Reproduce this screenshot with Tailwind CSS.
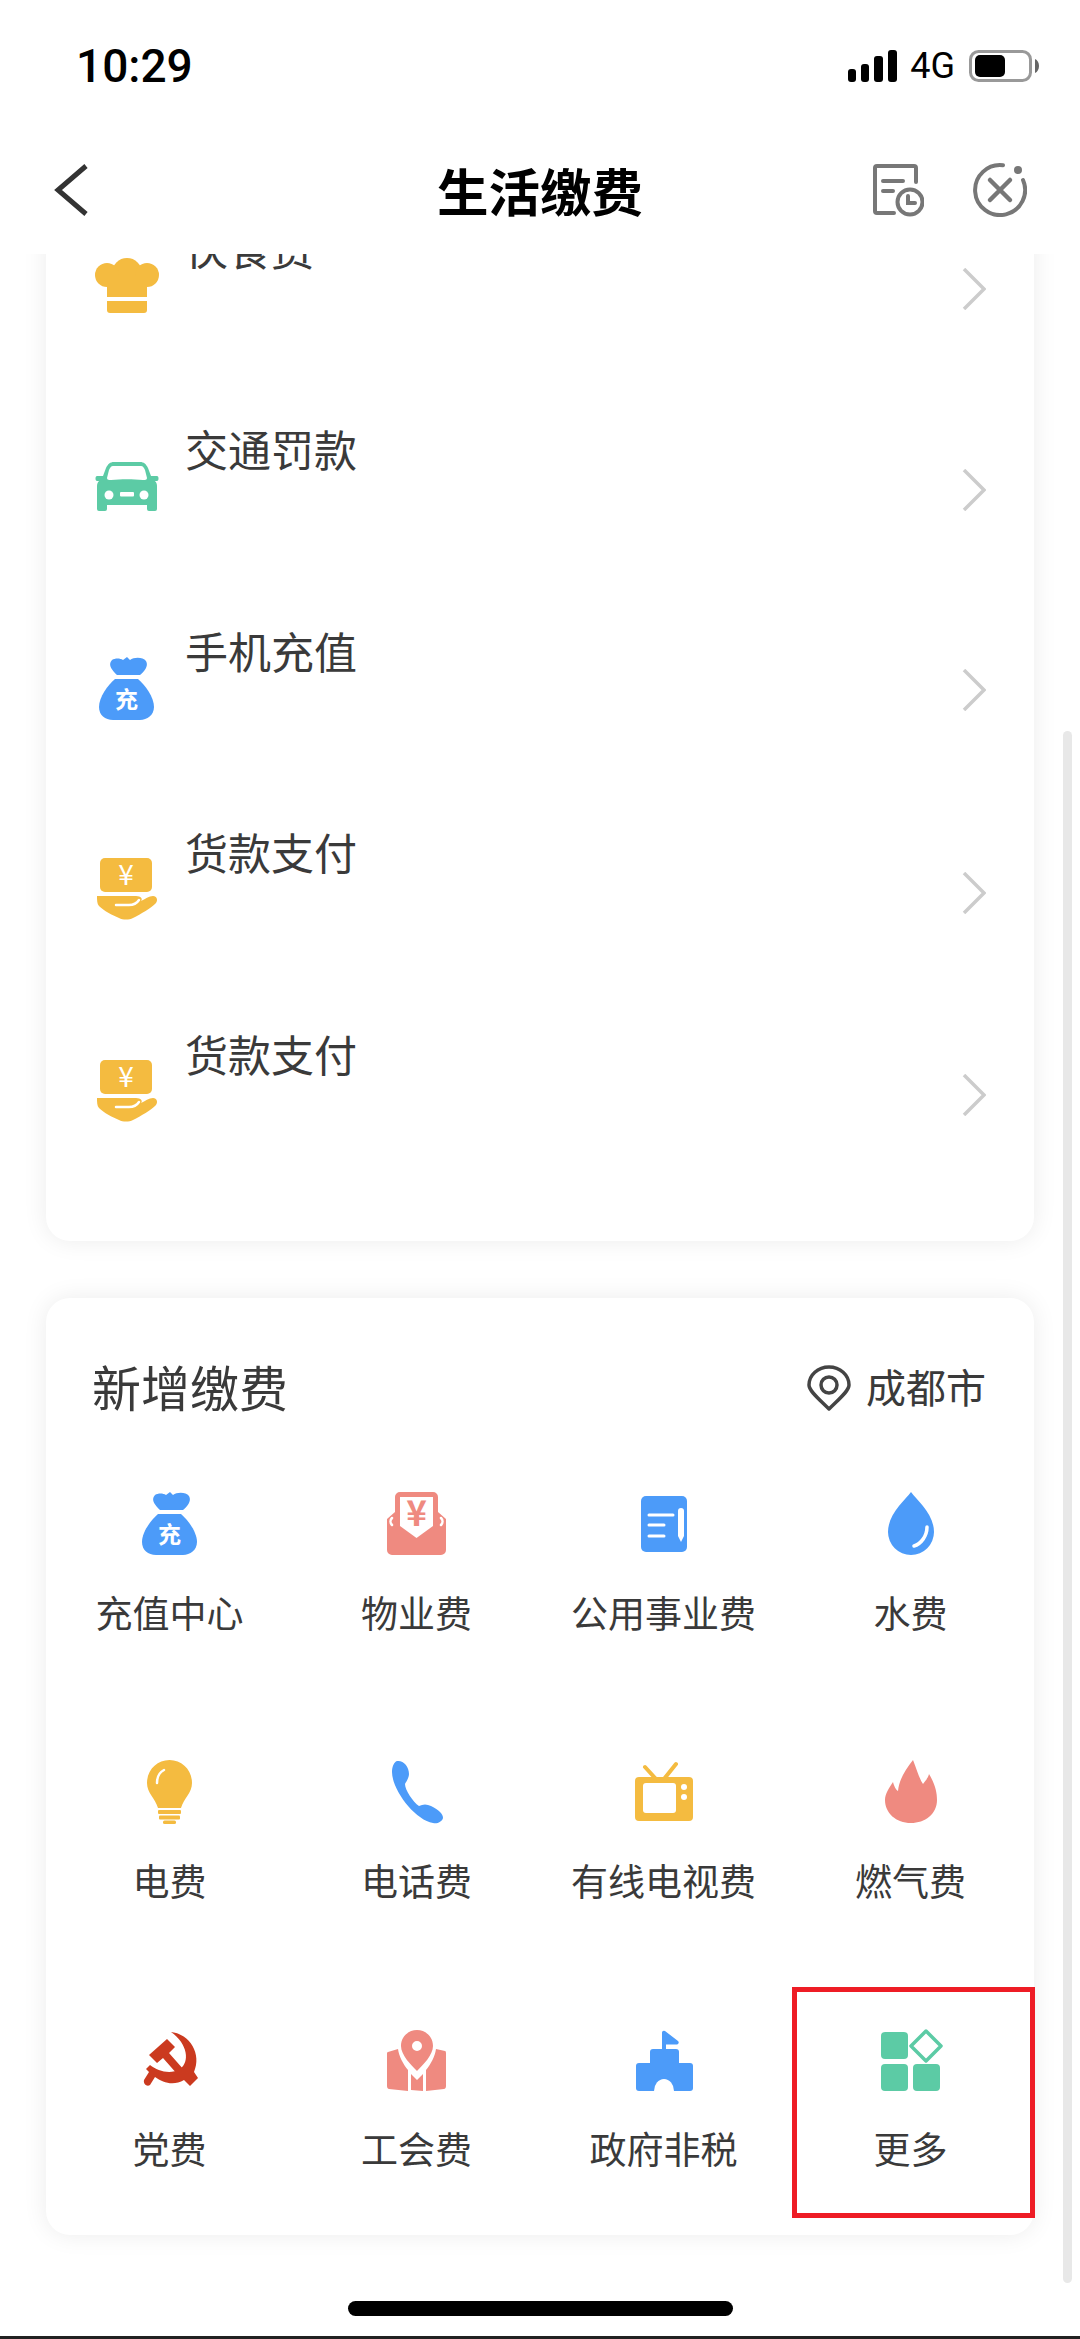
<!DOCTYPE html>
<html lang="zh-CN">
<head>
  <meta charset="UTF-8">
  <meta name="viewport" content="width=device-width, initial-scale=1.0">
  <title>生活缴费</title>
  <script src="https://cdn.jsdelivr.net/npm/@tailwindcss/browser@4"></script>
</head>
<body class="bg-white text-[#3a3a3a] font-['Noto_Sans_CJK_SC','Noto_Sans',sans-serif]">
  <div class="relative w-[1080px] h-[2339px] overflow-hidden flex flex-col">

    <!-- Status bar -->
    <div class="h-[132px] shrink-0 flex items-center pl-[76px] pr-[41px] font-['Roboto',sans-serif] text-black">
      <span class="text-[46px] font-medium leading-none">10:29</span>
      <svg class="ml-auto" width="49" height="32" viewBox="0 0 49 32" fill="#000">
        <rect x="0" y="19" width="8" height="13" rx="3"/>
        <rect x="13" y="14" width="8" height="18" rx="3"/>
        <rect x="26" y="6" width="9" height="26" rx="3"/>
        <rect x="40" y="0" width="9" height="32" rx="3"/>
      </svg>
      <span class="ml-[13px] text-[36px] leading-none">4G</span>
      <svg class="ml-[14px]" width="70" height="32" viewBox="0 0 70 32">
        <rect x="1.5" y="1.5" width="60" height="29" rx="8" fill="none" stroke="#999" stroke-width="3"/>
        <rect x="6" y="5" width="30" height="22" rx="5" fill="#000"/>
        <path d="M66 9c2.500 1 4 4 4 7s-1.500 6-4 7Z" fill="#666"/>
      </svg>
    </div>

    <!-- Nav bar -->
    <header class="h-[122px] shrink-0 pb-[6px] grid grid-cols-[1fr_auto_1fr] items-center">
      <svg class="ml-[53px]" width="36" height="52" viewBox="0 0 36 52" fill="none" stroke="#333" stroke-width="5">
        <path d="M33 2 5 26 33 50"/>
      </svg>
      <h1 class="text-[51.5px] font-bold text-black leading-none">生活缴费</h1>
      <div class="flex items-center justify-end gap-[49px] pr-[53px]">
        <svg width="52" height="54" viewBox="0 0 52 54" fill="none" stroke="#777" stroke-width="4" stroke-linecap="round">
          <path d="M22 50H5a2 2 0 0 1-2-2V5a2 2 0 0 1 2-2H42a2 2 0 0 1 2 2V19"/>
          <path d="M11 18H31M11 28H21"/>
          <circle cx="38" cy="39" r="12.500"/>
          <path d="M36 33V40H43"/>
        </svg>
        <svg width="54" height="54" viewBox="0 0 54 54" fill="none" stroke="#777" stroke-width="4" stroke-linecap="round">
          <path d="M30 2.200A25 25 0 1 0 50 17"/>
          <path d="M17 17 37 37M37 17 17 37" stroke-width="4.500"/>
          <circle cx="45" cy="7" r="4" fill="#777" stroke="none"/>
        </svg>
      </div>
    </header>

    <!-- Content -->
    <main class="flex-1 overflow-hidden px-[46px]">
      <!-- Scrolled list card -->
      <section class="-mt-[37.5px] bg-white rounded-[24px] shadow-[0_0_24px_rgba(0,0,0,0.08)] pb-[17px]">
        <div class="h-[201.5px] flex items-start pl-[49px] pr-[48px]">
          <svg class="mt-[37px] shrink-0" width="64" height="64" viewBox="0 0 64 64" fill="#f4bb40">
            <circle cx="32" cy="19" r="15"/>
            <circle cx="12" cy="21" r="12"/>
            <circle cx="52" cy="21" r="12"/>
            <path d="M12 22H52V43H12Z"/>
            <path d="M12 47H52V56a3 3 0 0 1-3 3H15a3 3 0 0 1-3-3Z"/>
          </svg>
          <span class="ml-[26px] mt-[9px] text-[43px] leading-[42px]">伙食费</span>
          <svg class="ml-auto mt-[51px]" width="24" height="42" viewBox="0 0 24 42" fill="none" stroke="#ccc" stroke-width="3.500"><path d="M2 1 22 21 2 41"/></svg>
        </div>
        <div class="h-[201.5px] flex items-start pl-[49px] pr-[48px]">
          <svg class="mt-[37px] shrink-0" width="64" height="64" viewBox="0 0 64 64">
            <path fill="#5ccba5" d="M19 7H45C49 7 51 9 53 13L56 21H62C64 21 64 26 62 26H60C62 28 62 30 62 32V54a2 2 0 0 1-2 2H54a2 2 0 0 1-2-2V50H12V54a2 2 0 0 1-2 2H4a2 2 0 0 1-2-2V32C2 30 2 28 4 26H2C0 26 0 21 2 21H8L11 13C13 9 15 7 19 7Z"/>
            <path fill="#fff" d="M18 11H46C48 11 49 13 50 15L52 23C52 25 50 25 48 25 38 24 26 24 16 25 14 25 12 25 12 23L14 15C15 13 16 11 18 11Z"/>
            <circle cx="14" cy="40" r="4.500" fill="#fff"/>
            <circle cx="49" cy="40" r="4.500" fill="#fff"/>
            <rect x="25" y="37" width="14" height="4.500" rx="1" fill="#fff"/>
          </svg>
          <span class="ml-[26px] mt-[9px] text-[43px] leading-[42px]">交通罚款</span>
          <svg class="ml-auto mt-[51px]" width="24" height="42" viewBox="0 0 24 42" fill="none" stroke="#ccc" stroke-width="3.500"><path d="M2 1 22 21 2 41"/></svg>
        </div>
        <div class="h-[201.5px] flex items-start pl-[49px] pr-[48px]">
          <svg class="mt-[37px] shrink-0" width="64" height="64" viewBox="0 0 64 64">
            <path fill="#4c9bf9" d="M17 3c3-2 8-2 11 0l4-3 3 3c4-3 13-3 16 1 3 5-2 11-6 14H22C18 14 12 8 17 3Z"/>
            <path fill="#4c9bf9" d="M20 22H43C50 28 59 40 59 50 59 58 52 63 45 63H18C10 63 4 58 4 50 4 40 13 28 20 22Z"/>
            <text x="31.5" y="51" text-anchor="middle" font-size="23" font-weight="700" fill="#fff" font-family="Noto Sans CJK SC">充</text>
          </svg>
          <span class="ml-[26px] mt-[9px] text-[43px] leading-[42px]">手机充值</span>
          <svg class="ml-auto mt-[49px]" width="24" height="42" viewBox="0 0 24 42" fill="none" stroke="#ccc" stroke-width="3.500"><path d="M2 1 22 21 2 41"/></svg>
        </div>
        <div class="h-[201.5px] flex items-start pl-[49px] pr-[48px]">
          <svg class="mt-[37px] shrink-0" width="64" height="64" viewBox="0 0 64 64">
            <rect x="5" y="0" width="52" height="34" rx="5" fill="#f4bb40"/>
            <text x="31" y="27" text-anchor="middle" font-size="28" fill="#fff" font-family="Noto Sans CJK SC">¥</text>
            <path fill="#f4bb40" d="M2 38H41C46 38 48 41 46 43 50 41 54 38 58 38 62 38 63 42 61 45 56 50 46 56 38 60 34 62 28 62 24 60 17 57 9 53 4 48 2 46 2 42 2 38Z"/>
            <path fill="none" stroke="#fff" stroke-width="2.500" stroke-linecap="round" d="M21 47H34C38 47 42 45 44 42"/>
          </svg>
          <span class="ml-[26px] mt-[9px] text-[43px] leading-[42px]">货款支付</span>
          <svg class="ml-auto mt-[51px]" width="24" height="42" viewBox="0 0 24 42" fill="none" stroke="#ccc" stroke-width="3.500"><path d="M2 1 22 21 2 41"/></svg>
        </div>
        <div class="h-[201.5px] flex items-start pl-[49px] pr-[48px]">
          <svg class="mt-[37px] shrink-0" width="64" height="64" viewBox="0 0 64 64">
            <rect x="5" y="0" width="52" height="34" rx="5" fill="#f4bb40"/>
            <text x="31" y="27" text-anchor="middle" font-size="28" fill="#fff" font-family="Noto Sans CJK SC">¥</text>
            <path fill="#f4bb40" d="M2 38H41C46 38 48 41 46 43 50 41 54 38 58 38 62 38 63 42 61 45 56 50 46 56 38 60 34 62 28 62 24 60 17 57 9 53 4 48 2 46 2 42 2 38Z"/>
            <path fill="none" stroke="#fff" stroke-width="2.500" stroke-linecap="round" d="M21 47H34C38 47 42 45 44 42"/>
          </svg>
          <span class="ml-[26px] mt-[9px] text-[43px] leading-[42px]">货款支付</span>
          <svg class="ml-auto mt-[51px]" width="24" height="42" viewBox="0 0 24 42" fill="none" stroke="#ccc" stroke-width="3.500"><path d="M2 1 22 21 2 41"/></svg>
        </div>
      </section>

      <!-- New payment card -->
      <section class="relative mt-[57px] bg-white rounded-[24px] shadow-[0_0_24px_rgba(0,0,0,0.08)] pt-[64px] pb-[69px]">
        <div class="flex items-center pl-[46px] pr-[48px] h-[48px]">
          <h2 class="text-[49px] leading-[48px]">新增缴费</h2>
          <svg class="ml-auto mt-[4px]" width="44" height="46" viewBox="0 0 44 46" fill="none" stroke="#444" stroke-width="3.500">
            <path d="M22 44C12 34 2 26 2 20a20 18 0 0 1 40 0C42 26 32 34 22 44Z" stroke-linejoin="round"/>
            <circle cx="22" cy="20" r="8"/>
          </svg>
          <span class="ml-[15px] text-[40px] leading-[48px]">成都市</span>
        </div>

        <div class="mt-[82px] grid grid-cols-4 gap-y-[130px] text-[37px] leading-[36px] text-center">
          <div class="flex flex-col items-center gap-[38px]">
            <svg width="64" height="64" viewBox="0 0 64 64">
              <path fill="#4c9bf9" d="M17 3c3-2 8-2 11 0l4-3 3 3c4-3 13-3 16 1 3 5-2 11-6 14H22C18 14 12 8 17 3Z"/>
              <path fill="#4c9bf9" d="M20 22H43C50 28 59 40 59 50 59 58 52 63 45 63H18C10 63 4 58 4 50 4 40 13 28 20 22Z"/>
              <text x="31.5" y="51" text-anchor="middle" font-size="23" font-weight="700" fill="#fff" font-family="Noto Sans CJK SC">充</text>
            </svg>
            <span>充值中心</span>
          </div>
          <div class="flex flex-col items-center gap-[38px]">
            <svg width="64" height="64" viewBox="0 0 64 64">
              <path fill="#ef8a80" d="M10 5a5 5 0 0 1 5-5H48a5 5 0 0 1 5 5V20L61 27V58a5 5 0 0 1-5 5H7a5 5 0 0 1-5-5V27L10 20Z"/>
              <path fill="#fff" d="M15 5H48V34L31.500 46 15 34Z"/>
              <path fill="none" stroke="#fff" stroke-width="2.500" stroke-linecap="round" d="M7 26C5 28 5 31 7 33M56 26C58 28 58 31 56 33"/>
              <text x="31.500" y="34" text-anchor="middle" font-size="35" font-weight="700" fill="#ef8a80" font-family="Noto Sans CJK SC">¥</text>
            </svg>
            <span>物业费</span>
          </div>
          <div class="flex flex-col items-center gap-[38px]">
            <svg width="64" height="64" viewBox="0 0 64 64">
              <rect x="9" y="4" width="46" height="56" rx="5" fill="#4c9bf9"/>
              <path fill="none" stroke="#fff" stroke-width="3" stroke-linecap="round" d="M17 23H41M17 33H32M17 44H32"/>
              <path fill="#fff" d="M46 19a3 3 0 0 1 6 0V44L49 50 46 44Z"/>
            </svg>
            <span>公用事业费</span>
          </div>
          <div class="flex flex-col items-center gap-[38px]">
            <svg width="64" height="64" viewBox="0 0 64 64">
              <path fill="#4c9bf9" d="M32 0C38 8 55 22 55 40A23 23 0 0 1 9 40C9 22 26 8 32 0Z"/>
              <path fill="none" stroke="#fff" stroke-width="3.500" stroke-linecap="round" d="M35 54C42 52 48 44 48 35"/>
            </svg>
            <span>水费</span>
          </div>

          <div class="flex flex-col items-center gap-[38px]">
            <svg width="64" height="64" viewBox="0 0 64 64" fill="#f4bb40">
              <path d="M31.500 0C44 0 54 10 54 23 54 33 46 38 43 48H20C17 38 9 33 9 23 9 10 19 0 31.500 0Z"/>
              <rect x="20" y="50" width="23" height="4" rx="1"/>
              <rect x="21" y="55.500" width="21" height="4" rx="1"/>
              <rect x="25" y="60.500" width="13" height="3.500" rx="1.500"/>
              <path fill="none" stroke="#fff" stroke-width="2.500" stroke-linecap="round" d="M19 23C19 17 22 12 26 10"/>
            </svg>
            <span>电费</span>
          </div>
          <div class="flex flex-col items-center gap-[38px]">
            <svg width="64" height="64" viewBox="0 0 64 64">
              <path fill="#4c9bf9" d="M12 1C18 0 24 6 24 14 24 18 21 22 20 24 20 30 28 42 34 46 38 44 42 44 46 46 54 50 58 54 58 58 57 62 52 64 48 63 30 60 7 30 7 12 7 7 9 2 12 1Z"/>
            </svg>
            <span>电话费</span>
          </div>
          <div class="flex flex-col items-center gap-[38px]">
            <svg width="64" height="64" viewBox="0 0 64 64">
              <path fill="none" stroke="#f4bb40" stroke-width="4" stroke-linecap="round" d="M13 7 24 19M44 4 32 19"/>
              <rect x="3" y="17" width="58" height="44" rx="4" fill="#f4bb40"/>
              <rect x="11" y="23" width="33" height="30" rx="3" fill="#fff"/>
              <circle cx="52" cy="27" r="3" fill="#fff"/>
              <circle cx="52" cy="37" r="3" fill="#fff"/>
            </svg>
            <span>有线电视费</span>
          </div>
          <div class="flex flex-col items-center gap-[38px]">
            <svg width="64" height="64" viewBox="0 0 64 64">
              <path fill="#ef8a80" d="M34 0C38 10 40 18 44 24 47 20 49 18 50 14 56 24 58 32 58 40 58 54 46 63 32 63 17 63 6 53 6 40 6 34 10 28 14 22 15 26 17 30 19 31 20 20 26 10 34 0Z"/>
            </svg>
            <span>燃气费</span>
          </div>

          <div class="flex flex-col items-center gap-[38px]">
            <svg width="64" height="64" viewBox="0 0 64 64" fill="#cb3a1f">
              <path d="M33 4C52 6 64 26 56 44L60 50 52 58 46 52C36 58 25 55 17 49L12 57C9 59 5 56 6 52L11 44 8 41 12 37C20 43 32 47 42 41 52 34 50 16 33 4Z"/>
              <path d="M11 27 29 11 37 19 31 25 46 42 40 47 25 30 19 35Z"/>
            </svg>
            <span>党费</span>
          </div>
          <div class="flex flex-col items-center gap-[38px]">
            <svg width="64" height="64" viewBox="0 0 64 64" fill="#ef8a80">
              <path fill-rule="evenodd" d="M32 2C41 2 48 9 48 18 48 27 38 37 32 43 26 37 16 27 16 18 16 9 23 2 32 2ZM32 13a5 5 0 1 0 0 10 5 5 0 0 0 0-10Z"/>
              <path d="M3 24 13 21C14 28 18 36 23 42V63L4 61C3 61 2 60 2 58V26C2 25 2 24 3 24Z"/>
              <path d="M26 46 32 52 38 46V63L26 62Z"/>
              <path d="M51 21 60 23C61 23 61 25 61 26V58C61 60 60 61 59 61L41 63V42C46 36 50 28 51 21Z"/>
            </svg>
            <span>工会费</span>
          </div>
          <div class="flex flex-col items-center gap-[38px]">
            <svg width="64" height="64" viewBox="0 0 64 64" fill="#4c9bf9">
              <path d="M30 5a2 2 0 0 1 3-2L46 13a2 2 0 0 1-1 3.500H34V22H30Z"/>
              <rect x="18" y="21" width="29" height="20" rx="3"/>
              <rect x="4" y="35" width="57" height="28" rx="3"/>
              <path fill="#fff" d="M22 63a10 12 0 0 1 20 0Z"/>
            </svg>
            <span>政府非税</span>
          </div>
          <div class="flex flex-col items-center gap-[38px]">
            <svg width="64" height="64" viewBox="0 0 64 64" fill="#5ccba5">
              <rect x="2" y="4" width="27" height="27" rx="4"/>
              <rect x="2" y="36" width="27" height="27" rx="4"/>
              <rect x="34" y="36" width="27" height="27" rx="4"/>
              <path d="M47 3 62 18 47 33 32 18Z" fill="none" stroke="#5ccba5" stroke-width="3.500" stroke-linejoin="round"/>
            </svg>
            <span>更多</span>
          </div>
        </div>

        <!-- Highlight box drawn over the last cell -->
        <div class="absolute left-[746px] top-[689px] w-[243px] h-[231px] border-[5px] border-[#ee1c25]"></div>
      </section>
    </main>

    <!-- Scrollbar, home indicator, bottom edge -->
    <div class="absolute left-[1063px] top-[731px] w-[9px] h-[1552px] rounded-full bg-[#e8e8e8]"></div>
    <div class="absolute left-[348px] top-[2301px] w-[385px] h-[15px] rounded-full bg-black"></div>
    <div class="absolute left-0 bottom-0 w-full h-[3px] bg-[#222]"></div>
  </div>
</body>
</html>
